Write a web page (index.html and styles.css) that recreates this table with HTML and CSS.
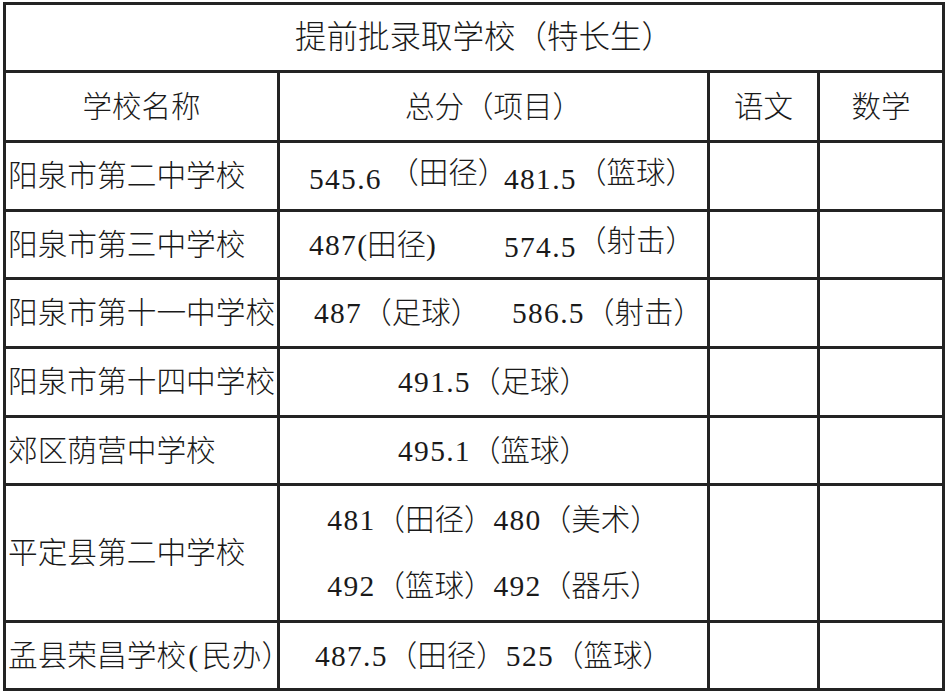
FILE: index.html
```html
<!DOCTYPE html>
<html lang="zh-CN">
<head>
<meta charset="utf-8">
<title>提前批录取学校（特长生）</title>
<link rel="stylesheet" href="styles.css">
</head>
<body>
<div class="sheet">
  <div class="cell title">提前批录取学校（特长生）</div>

  <div class="cell head">学校名称</div>
  <div class="cell head">总分（项目）</div>
  <div class="cell head">语文</div>
  <div class="cell head">数学</div>

  <div class="cell name">阳泉市第二中学校</div>
  <div class="cell score split s1"><span class="part"><span class="num low">545.6</span> （田径）</span><span class="part"><span class="num low">481.5</span>（篮球）</span></div>
  <div class="cell"></div>
  <div class="cell"></div>

  <div class="cell name">阳泉市第三中学校</div>
  <div class="cell score split s1"><span class="part"><span class="num">487</span>(田径)</span><span class="part"><span class="num low">574.5</span>（射击）</span></div>
  <div class="cell"></div>
  <div class="cell"></div>

  <div class="cell name">阳泉市第十一中学校</div>
  <div class="cell score split s3"><span class="part"><span class="num">487</span>（足球）</span><span class="part"><span class="num">586.5</span>（射击）</span></div>
  <div class="cell"></div>
  <div class="cell"></div>

  <div class="cell name">阳泉市第十四中学校</div>
  <div class="cell score"><span class="num">491.5</span>（足球）</div>
  <div class="cell"></div>
  <div class="cell"></div>

  <div class="cell name">郊区荫营中学校</div>
  <div class="cell score"><span class="num">495.1</span>（篮球）</div>
  <div class="cell"></div>
  <div class="cell"></div>

  <div class="cell name">平定县第二中学校</div>
  <div class="cell score multi">
    <div class="line"><span class="num">481</span>（田径）<span class="num">480</span>（美术）</div>
    <div class="line"><span class="num">492</span>（篮球）<span class="num">492</span>（器乐）</div>
  </div>
  <div class="cell"></div>
  <div class="cell"></div>

  <div class="cell name">孟县荣昌学校<span class="paren">(</span>民办）</div>
  <div class="cell score"><span class="num">487.5</span>（田径）<span class="num">525</span>（篮球）</div>
  <div class="cell"></div>
  <div class="cell"></div>
</div>
</body>
</html>
```

FILE: styles.css
```css
html, body {
  margin: 0;
  padding: 0;
  background: #ffffff;
}

body {
  font-family: "Liberation Serif", "Noto Sans CJK SC", serif;
  font-size: 29.5px;
  color: #1a1a1a;
}

.sheet {
  display: grid;
  grid-template-columns: 271px 427px 107px 122px;
  grid-template-rows: 65px 67px 66px 65px 66px 66px 65px 134px 65px;
  gap: 3px;
  padding: 3px;
  width: max-content;
  margin: 2px 0 0 3px;
  background: #232323;
}

.cell {
  background: #ffffff;
  display: flex;
  align-items: center;
  justify-content: center;
  white-space: nowrap;
  line-height: 36px;
  font-weight: 300;
}

.title {
  grid-column: 1 / -1;
  font-size: 31.5px;
  padding-left: 20px;
}

.name {
  justify-content: flex-start;
  padding-left: 2px;
  font-size: 29.7px;
}

.paren {
  margin: 0 4px 0 2px;
}

.split {
  justify-content: flex-start;
}

.split.s1 {
  padding-left: 29px;
}

.split.s1 .part:first-child {
  width: 195px;
}

.split.s3 {
  padding-left: 34px;
}

.split.s3 .part:first-child {
  width: 198px;
}

.part {
  display: inline-block;
}

.num {
  letter-spacing: 1.3px;
}

.low {
  vertical-align: -0.22em;
}

.multi {
  flex-direction: column;
}

.multi .line {
  line-height: 66px;
}
```
